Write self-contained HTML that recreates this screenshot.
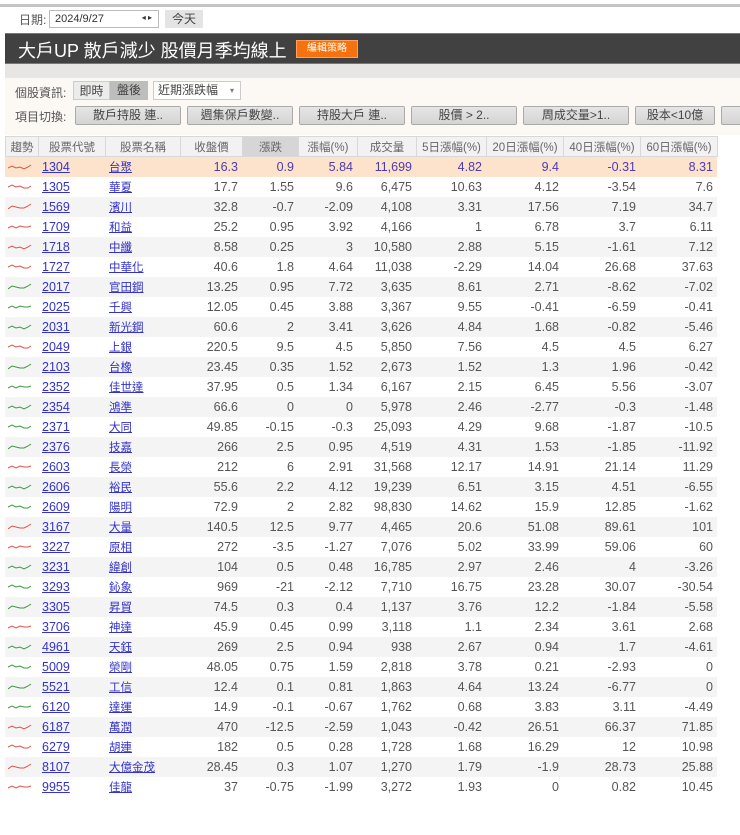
<!DOCTYPE html>
<html><head><meta charset="utf-8">
<style>
*{box-sizing:border-box;margin:0;padding:0}
body{width:740px;height:835px;overflow:hidden;background:#fff;font-family:"Liberation Sans","Noto Sans CJK TC",sans-serif;font-size:12px;color:#444;position:relative}
.topbar{position:absolute;left:0;top:4px;width:740px;height:3px;background:#c4c4c4}
.daterow{position:absolute;left:5px;top:7px;width:735px;height:26px;background:#fff}
.daterow .lbl{position:absolute;left:14px;top:4px;color:#555}
.dbox{position:absolute;left:44px;top:3px;width:110px;height:18px;border:1px solid #bbb;background:#fff;font-size:11px;color:#333;padding:2px 5px}
.dbox span{position:absolute;right:6px;top:2px;font-size:8px}
.today{position:absolute;left:160px;top:3px;width:38px;height:18px;background:#e4e4e4;text-align:center;line-height:18px;color:#444}
.title{position:absolute;left:5px;top:33px;width:735px;height:31px;background:#414141;border-top:1px solid #777;border-bottom:1px solid #777}
.title h1{position:absolute;left:13px;top:3px;font-size:18px;font-weight:normal;color:#fff;white-space:nowrap}
.edit{position:absolute;left:291px;top:6px;width:62px;height:18px;background:#f5720e;border:1px solid #ffa060;color:#fff;font-size:10px;text-align:center;line-height:16px}
.panel{position:absolute;left:5px;top:64px;width:735px;height:71px;background:#fcf8f4}
.gap{position:absolute;left:5px;top:64px;width:735px;height:14px;background:#e8e6e4}
.r1{position:absolute;left:15px;top:84px;color:#555}
.seg{position:absolute;top:81px;height:19px;line-height:19px;text-align:center;color:#444}
.sel{position:absolute;left:153px;top:81px;width:88px;height:19px;border:1px solid #ccc;background:#fff;padding-left:4px;line-height:17px}
.sel span{position:absolute;right:6px;top:0;font-size:8px;color:#777}
.r2{position:absolute;left:15px;top:108px;color:#555}
.btn{position:absolute;top:106px;height:19px;background:linear-gradient(#e6e6e6,#d4d4d4);border:1px solid #aaa;border-radius:2px;text-align:center;line-height:17px;color:#444}
table{position:absolute;left:5px;top:136px;border-collapse:collapse;table-layout:fixed;width:712px}
td,th{height:20px;padding:0 4px;white-space:nowrap;overflow:hidden}
th{font-weight:normal;color:#666;background:#f2f2f2;border:1px solid #d8d8d8;font-size:11.5px;text-align:center}
th.g{background:#d6d6d6}
td{text-align:right;font-size:12.5px;color:#555}
tr:nth-child(odd) td{background:#f4f4f4}
tr.hl td{background:#fde3cc!important;color:#4b3cb0}
td.a{text-align:left;padding-left:3px}
td.c,td.n{text-align:left}
td.c a{color:#3333cc;text-decoration:underline}
td.n a{color:#3333cc;text-decoration:underline;font-size:11.5px}
svg{display:block}
</style></head><body>
<div class="topbar"></div>
<div class="daterow"><div class="lbl">日期:</div><div class="dbox">2024/9/27<span>◂ ▸</span></div><div class="today">今天</div></div>
<div class="title"><h1>大戶UP 散戶減少 股價月季均線上</h1><div class="edit">編輯策略</div></div>
<div class="panel"></div>
<div class="gap"></div>
<div class="r1">個股資訊:</div>
<div class="seg" style="left:73px;width:37px;background:#ececec;border:1px solid #ccc">即時</div>
<div class="seg" style="left:110px;width:38px;background:#bdbdbd">盤後</div>
<div class="sel">近期漲跌幅<span>▾</span></div>
<div class="r2">項目切換:</div>
<div class="btn" style="left:75px;width:106px">散戶持股 連..</div>
<div class="btn" style="left:187px;width:106px">週集保戶數變..</div>
<div class="btn" style="left:299px;width:106px">持股大戶 連..</div>
<div class="btn" style="left:411px;width:106px">股價 &gt; 2..</div>
<div class="btn" style="left:523px;width:106px">周成交量&gt;1..</div>
<div class="btn" style="left:635px;width:80px">股本&lt;10億</div>
<div class="btn" style="left:721px;width:30px"></div>
<table>
<colgroup><col style="width:33px"><col style="width:67px"><col style="width:75px"><col style="width:62px"><col style="width:56px"><col style="width:59px"><col style="width:59px"><col style="width:70px"><col style="width:77px"><col style="width:77px"><col style="width:77px"></colgroup>
<tr><th>趨勢</th><th>股票代號</th><th>股票名稱</th><th>收盤價</th><th class="g">漲跌</th><th>漲幅(%)</th><th>成交量</th><th>5日漲幅(%)</th><th>20日漲幅(%)</th><th>40日漲幅(%)</th><th>60日漲幅(%)</th></tr>
</table>
<table id="t" style="top:157px"></table>
<script>
var R="#e0504a",G="#3a9a3a";
var d=[
["1304","台聚","16.3","0.9","5.84","11,699","4.82","9.4","-0.31","8.31",R],
["1305","華夏","17.7","1.55","9.6","6,475","10.63","4.12","-3.54","7.6",R],
["1569","濱川","32.8","-0.7","-2.09","4,108","3.31","17.56","7.19","34.7",R],
["1709","和益","25.2","0.95","3.92","4,166","1","6.78","3.7","6.11",R],
["1718","中纖","8.58","0.25","3","10,580","2.88","5.15","-1.61","7.12",R],
["1727","中華化","40.6","1.8","4.64","11,038","-2.29","14.04","26.68","37.63",R],
["2017","官田鋼","13.25","0.95","7.72","3,635","8.61","2.71","-8.62","-7.02",G],
["2025","千興","12.05","0.45","3.88","3,367","9.55","-0.41","-6.59","-0.41",G],
["2031","新光鋼","60.6","2","3.41","3,626","4.84","1.68","-0.82","-5.46",G],
["2049","上銀","220.5","9.5","4.5","5,850","7.56","4.5","4.5","6.27",R],
["2103","台橡","23.45","0.35","1.52","2,673","1.52","1.3","1.96","-0.42",G],
["2352","佳世達","37.95","0.5","1.34","6,167","2.15","6.45","5.56","-3.07",G],
["2354","鴻準","66.6","0","0","5,978","2.46","-2.77","-0.3","-1.48",G],
["2371","大同","49.85","-0.15","-0.3","25,093","4.29","9.68","-1.87","-10.5",G],
["2376","技嘉","266","2.5","0.95","4,519","4.31","1.53","-1.85","-11.92",G],
["2603","長榮","212","6","2.91","31,568","12.17","14.91","21.14","11.29",R],
["2606","裕民","55.6","2.2","4.12","19,239","6.51","3.15","4.51","-6.55",G],
["2609","陽明","72.9","2","2.82","98,830","14.62","15.9","12.85","-1.62",G],
["3167","大量","140.5","12.5","9.77","4,465","20.6","51.08","89.61","101",R],
["3227","原相","272","-3.5","-1.27","7,076","5.02","33.99","59.06","60",R],
["3231","緯創","104","0.5","0.48","16,785","2.97","2.46","4","-3.26",G],
["3293","鈊象","969","-21","-2.12","7,710","16.75","23.28","30.07","-30.54",G],
["3305","昇貿","74.5","0.3","0.4","1,137","3.76","12.2","-1.84","-5.58",G],
["3706","神達","45.9","0.45","0.99","3,118","1.1","2.34","3.61","2.68",R],
["4961","天鈺","269","2.5","0.94","938","2.67","0.94","1.7","-4.61",G],
["5009","榮剛","48.05","0.75","1.59","2,818","3.78","0.21","-2.93","0",G],
["5521","工信","12.4","0.1","0.81","1,863","4.64","13.24","-6.77","0",G],
["6120","達運","14.9","-0.1","-0.67","1,762","0.68","3.83","3.11","-4.49",G],
["6187","萬潤","470","-12.5","-2.59","1,043","-0.42","26.51","66.37","71.85",R],
["6279","胡連","182","0.5","0.28","1,728","1.68","16.29","12","10.98",R],
["8107","大億金茂","28.45","0.3","1.07","1,270","1.79","-1.9","28.73","25.88",R],
["9955","佳龍","37","-0.75","-1.99","3,272","1.93","0","0.82","10.45",R]];
var pts=["0,5 4,3 8,5 12,4 16,6 20,4 23,2","0,4 4,2 8,4 12,3 16,5 20,5 23,3","0,6 4,3 8,4 12,5 16,5 20,3 23,1","0,5 4,3 8,5 12,3 16,4 20,4 23,3"];
var h='<colgroup><col style="width:33px"><col style="width:67px"><col style="width:75px"><col style="width:62px"><col style="width:56px"><col style="width:59px"><col style="width:59px"><col style="width:70px"><col style="width:77px"><col style="width:77px"><col style="width:77px"></colgroup>';
d.forEach(function(r,i){
h+='<tr'+(i==0?' class="hl"':'')+'><td class="a"><svg width="24" height="8"><polyline points="'+pts[i%4]+'" fill="none" stroke="'+r[10]+'" stroke-width="1"/></svg></td><td class="c"><a>'+r[0]+'</a></td><td class="n"><a>'+r[1]+'</a></td>';
for(var k=2;k<10;k++)h+='<td>'+r[k]+'</td>';
h+='</tr>';});
document.getElementById('t').innerHTML=h;
</script>
</body></html>
